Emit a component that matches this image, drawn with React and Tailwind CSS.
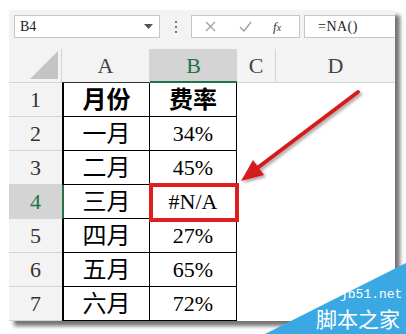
export default function App() {
  const rows = [
    ["1", "月份", "费率"],
    ["2", "一月", "34%"],
    ["3", "二月", "45%"],
    ["4", "三月", "#N/A"],
    ["5", "四月", "27%"],
    ["6", "五月", "65%"],
    ["7", "六月", "72%"],
  ];
  const font = { fontFamily: "'Liberation Serif', 'Noto Sans CJK SC', serif" };
  return (
    <div className="relative w-[406px] h-[334px] bg-white overflow-hidden" style={font}>
      <div className="ml-[9px] mt-[10px] w-[386px] h-[311px] bg-[#f3f3f3] shadow-[5px_5px_4px_rgba(0,0,0,0.55)] flex flex-col overflow-hidden">
        {/* formula bar */}
        <div className="h-[39px] flex items-start pt-[5px] pl-[5px] shrink-0">
          <div className="w-[146px] h-[23px] bg-white border border-[#c6c6c6] flex items-center justify-between pl-[5px] pr-[6px]">
            <span className="text-[14px] text-[#222]">B4</span>
            <svg width="9" height="5" viewBox="0 0 9 5"><polygon points="0,0 9,0 4.5,5" fill="#555" /></svg>
          </div>
          <div className="w-[31px] h-[23px] flex flex-col items-center justify-center gap-[3px]">
            <div className="w-[2px] h-[2px] bg-[#777]" />
            <div className="w-[2px] h-[2px] bg-[#777]" />
            <div className="w-[2px] h-[2px] bg-[#777]" />
          </div>
          <div className="w-[109px] h-[23px] bg-white border border-[#c6c6c6] flex items-center">
            <svg className="ml-[13px]" width="11" height="11" viewBox="0 0 11 11"><path d="M1 1L10 10M10 1L1 10" stroke="#a0a0a0" strokeWidth="1.3" /></svg>
            <svg className="ml-[23px]" width="13" height="11" viewBox="0 0 13 11"><path d="M1 6L5 10L12 1" stroke="#a0a0a0" strokeWidth="1.4" fill="none" /></svg>
            <span className="ml-[21px] text-[13px] italic text-[#333]" style={{ fontFamily: "'Liberation Serif', serif" }}>f<span className="text-[10px]">x</span></span>
          </div>
          <div className="ml-[4px] flex-1 h-[23px] bg-white border border-[#c6c6c6] border-r-0 flex items-center pl-[13px]">
            <span className="text-[14px] text-[#222] tracking-[0.5px]">=NA()</span>
          </div>
        </div>
        {/* column headers */}
        <div className="h-[34px] flex shrink-0 text-[22px] text-[#444]">
          <div className="w-[53px] border-r border-b border-[#d4d4d4] relative">
            <svg className="absolute right-[3px] bottom-[3px]" width="28" height="28" viewBox="0 0 28 28"><polygon points="28,0 28,28 0,28" fill="#c4c4c4" /></svg>
          </div>
          <div className="w-[88px] border-r border-[#d4d4d4] border-b border-b-[#333] flex items-center justify-center">A</div>
          <div className="w-[87px] bg-[#d4d4d4] border-b-2 border-[#217346] flex items-center justify-center text-[#217346]">B</div>
          <div className="w-[39px] border-r border-b border-[#d4d4d4] flex items-center justify-center">C</div>
          <div className="flex-1 border-b border-[#d4d4d4] flex items-center justify-center">D</div>
        </div>
        {/* rows */}
        {rows.map(([n, a, b], i) => {
          const sel = n === "4";
          return (
            <div key={n} className="h-[34px] flex shrink-0">
              <div className={`w-[53px] border-b border-[#d4d4d4] flex items-center justify-center text-[22px] ${sel ? "bg-[#d4d4d4] text-[#217346]" : "bg-[#f3f3f3] text-[#333]"}`}>{n}</div>
              <div className={`w-[88px] bg-white border-b border-r border-b-black border-r-black border-l-2 ${sel ? "border-l-[#217346]" : "border-l-black"} flex items-center justify-center text-[24px] text-black ${i === 0 ? "font-bold" : ""}`}>
                {a}
              </div>
              <div className={`w-[87px] bg-white border-b border-r border-black flex items-center justify-center text-black ${i === 0 ? "font-bold text-[24px]" : "text-[22px]"}`}>
                {b}
              </div>
              <div className="flex-1 bg-white" />
            </div>
          );
        })}
      </div>

      {/* red highlight box */}
      <div className="absolute left-[149px] top-[183px] w-[90px] h-[39px] border-[4px] border-[#e01e1e]" />

      {/* arrow */}
      <svg className="absolute left-0 top-0" width="406" height="334" viewBox="0 0 406 334">
        <defs>
          <filter id="sh" x="-20%" y="-20%" width="140%" height="140%">
            <feDropShadow dx="2" dy="2" stdDeviation="1.5" floodColor="#000" floodOpacity="0.35" />
          </filter>
        </defs>
        <g filter="url(#sh)">
          <line x1="358" y1="92" x2="256" y2="169" stroke="#d41e1e" strokeWidth="4" strokeLinecap="round" />
          <polygon points="241,181 264,175 253,160" fill="#d41e1e" />
        </g>
        <polygon points="265,334 406,334 406,263" fill="#3aa9e3" />
      </svg>

      {/* watermark text */}
      <div className="absolute left-[340px] top-[288px] text-[13px] leading-[13px] text-white" style={{ fontFamily: "'Liberation Mono', monospace" }}>jb51.net</div>
      <div className="absolute left-[316px] top-[308px] text-[21px] leading-[21px] text-white" style={{ fontFamily: "'Noto Sans CJK SC', sans-serif" }}>脚本之家</div>
    </div>
  );
}
